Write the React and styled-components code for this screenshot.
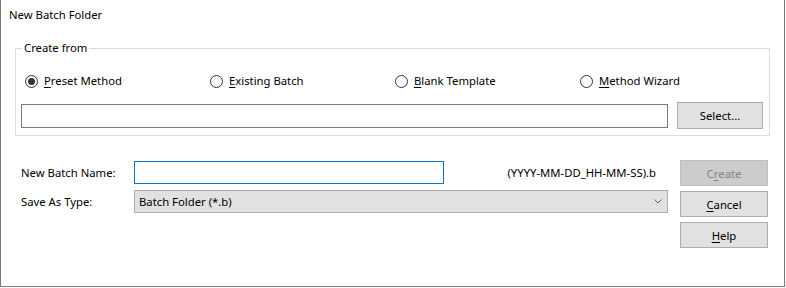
import React from 'react';
import styled, { createGlobalStyle } from 'styled-components';

const Global = createGlobalStyle`
  html, body { margin: 0; padding: 0; background: #fff; }
  body {
    font-family: "Segoe UI", "Noto Sans", sans-serif;
    font-size: 11.3px;
    color: #000;
  }
  * { box-sizing: border-box; }
`;

const Window = styled.div`
  width: 785px;
  height: 287px;
  border: 1px solid #7a7a7a;
  border-top: none;
  background: #fff;
  display: flex;
  flex-direction: column;
`;

const Title = styled.div`
  height: 30px;
  line-height: 30px;
  padding-left: 8px;
`;

const Group = styled.fieldset`
  margin: 10px 0 0 14px;
  width: 755px;
  padding: 0;
  min-width: 0;
  border: 1px solid #dcdcdc;
`;

const Legend = styled.legend`
  margin-left: 6px;
  padding: 0 2px;
  line-height: 16px;
`;

const GroupBody = styled.div`
  padding: 17px 6px 6px 5px;
`;

const RadioRow = styled.div`
  display: grid;
  grid-template-columns: repeat(4, 185px);
  padding-left: 4px;
  height: 16px;
`;

const RadioItem = styled.label`
  display: flex;
  align-items: center;
  gap: 6px;
  line-height: 16px;
`;

const Circle = styled.span`
  width: 13px;
  height: 13px;
  border-radius: 50%;
  border: 1px solid #333;
  display: flex;
  align-items: center;
  justify-content: center;
  flex: none;
  &::after {
    content: "";
    width: 7px;
    height: 7px;
    border-radius: 50%;
    background: ${p => (p.$checked ? '#333' : 'transparent')};
  }
`;

const Key = styled.span`
  text-decoration: underline;
  text-underline-offset: 2px;
`;

const PathRow = styled.div`
  display: flex;
  align-items: center;
  gap: 9px;
  margin-top: 13px;
  height: 27px;
`;

const TextBox = styled.div`
  width: ${p => p.$w}px;
  height: ${p => p.$h}px;
  border: 1px solid ${p => (p.$focus ? '#0078d7' : '#7a7a7a')};
  background: #fff;
  flex: none;
`;

const Button = styled.div`
  width: ${p => p.$w}px;
  height: ${p => p.$h}px;
  border: 1px solid ${p => (p.$disabled ? '#bfbfbf' : '#adadad')};
  background: ${p => (p.$disabled ? '#cccccc' : '#e1e1e1')};
  color: ${p => (p.$disabled ? '#838383' : '#000')};
  display: flex;
  align-items: center;
  justify-content: center;
  flex: none;
`;

const Lower = styled.div`
  display: flex;
  padding-left: 20px;
  gap: 12px;
`;

const FormCol = styled.div`
  width: 647px;
  padding-top: 25px;
  display: flex;
  flex-direction: column;
  gap: 6px;
`;

const FormRow = styled.div`
  display: flex;
  align-items: center;
  height: 23px;
`;

const Label = styled.div`
  width: 113px;
  flex: none;
`;

const Hint = styled.div`
  flex: 1;
  text-align: right;
  padding-right: 12px;
`;

const Combo = styled.div`
  width: 534px;
  height: 23px;
  border: 1px solid #adadad;
  background: #e1e1e1;
  display: flex;
  align-items: center;
  justify-content: space-between;
  padding: 0 5px 0 4px;
`;

const ButtonCol = styled.div`
  width: 88px;
  padding-top: 24px;
  display: flex;
  flex-direction: column;
  gap: 5px;
`;

const Chevron = () => (
  <svg width="8" height="5" viewBox="0 0 8 5">
    <path d="M0.5 0.5 L4 4 L7.5 0.5" fill="none" stroke="#606060" strokeWidth="1" />
  </svg>
);

export default function App() {
  return (
    <>
      <Global />
      <Window>
        <Title>New Batch Folder</Title>
        <Group>
          <Legend>Create from</Legend>
          <GroupBody>
            <RadioRow>
              <RadioItem><Circle $checked /><span><Key>P</Key>reset Method</span></RadioItem>
              <RadioItem><Circle /><span><Key>E</Key>xisting Batch</span></RadioItem>
              <RadioItem><Circle /><span><Key>B</Key>lank Template</span></RadioItem>
              <RadioItem><Circle /><span><Key>M</Key>ethod Wizard</span></RadioItem>
            </RadioRow>
            <PathRow>
              <TextBox $w={647} $h={24} />
              <Button $w={86} $h={27}>Select...</Button>
            </PathRow>
          </GroupBody>
        </Group>
        <Lower>
          <FormCol>
            <FormRow>
              <Label>New Batch Name:</Label>
              <TextBox $w={310} $h={23} $focus />
              <Hint>(YYYY-MM-DD_HH-MM-SS).b</Hint>
            </FormRow>
            <FormRow>
              <Label>Save As Type:</Label>
              <Combo><span>Batch Folder (*.b)</span><Chevron /></Combo>
            </FormRow>
          </FormCol>
          <ButtonCol>
            <Button $w={88} $h={26} $disabled>C<Key>r</Key>eate</Button>
            <Button $w={88} $h={26}><Key>C</Key>ancel</Button>
            <Button $w={88} $h={26}><Key>H</Key>elp</Button>
          </ButtonCol>
        </Lower>
      </Window>
    </>
  );
}
